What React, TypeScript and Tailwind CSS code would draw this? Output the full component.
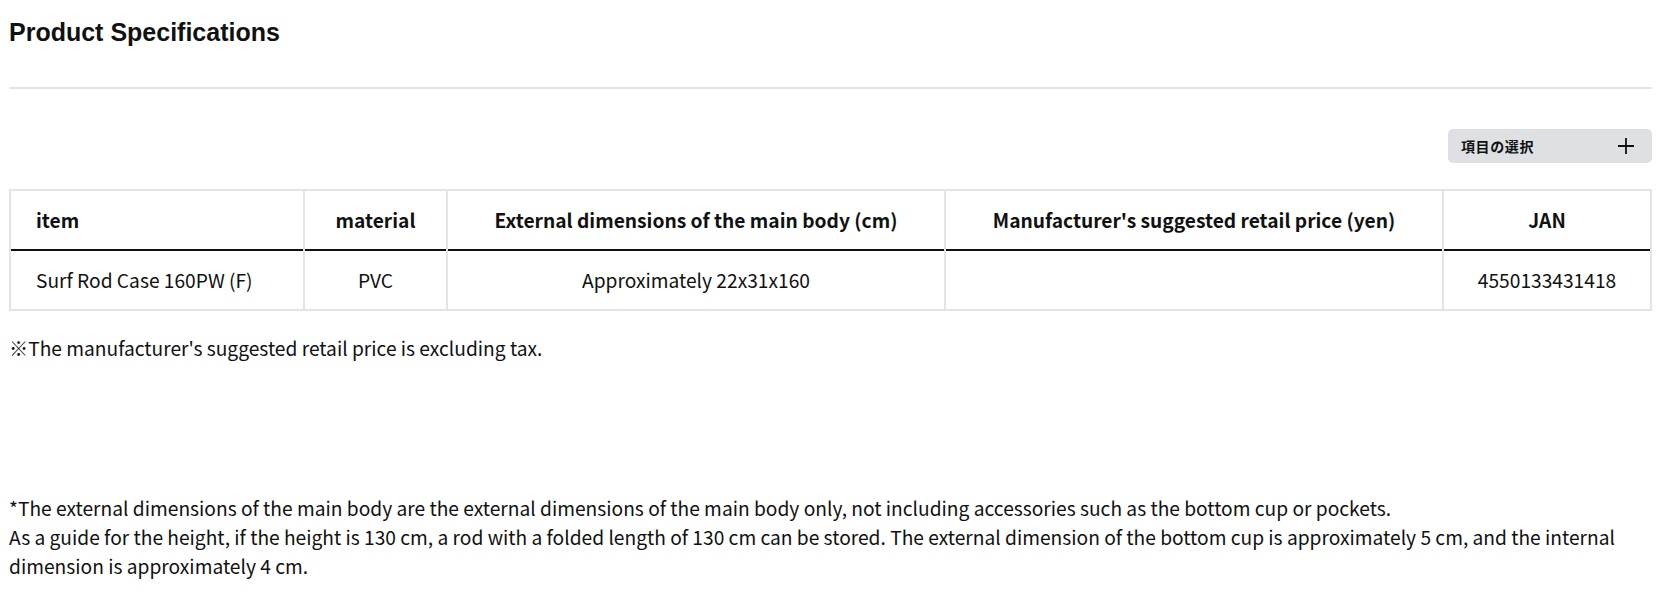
export default function App() {
  const font = { fontFamily: '"Noto Sans CJK JP", "Noto Sans", sans-serif' };
  return (
    <div className="min-h-screen bg-white px-[9px] text-[#111]" style={font}>
      <h2 className="pt-[16px] text-[25px] leading-[32px] font-bold text-[#111]" style={{ fontFamily: '"Liberation Sans", Arial, sans-serif' }}>
        Product Specifications
      </h2>
      <div className="mt-[39px] h-[2px] bg-[#e4e4e4]" />

      <div className="mt-[40px] flex justify-end">
        <button className="flex h-[34px] w-[204px] items-center justify-between rounded-[5px] bg-[#dee0e4] pl-[13px] pr-[17px] text-[14px] font-bold tracking-[0.6px] text-[#111]">
          <span>項目の選択</span>
          <svg width="18" height="18" viewBox="0 0 18 18" fill="none" stroke="#111" strokeWidth="1.8">
            <path d="M9 1v16M1 9h16" />
          </svg>
        </button>
      </div>

      <table className="mt-[26px] w-full table-fixed border-collapse border-2 border-[#e4e4e4] text-[19.2px]">
        <colgroup>
          <col className="w-[294px]" />
          <col className="w-[143px]" />
          <col className="w-[498px]" />
          <col className="w-[498px]" />
          <col />
        </colgroup>
        <thead>
          <tr className="h-[60px] border-b-2 border-b-[#111]">
            <th className="border-x-2 border-[#e4e4e4] pl-[25px] text-left font-bold">item</th>
            <th className="border-x-2 border-[#e4e4e4] text-center font-bold">material</th>
            <th className="border-x-2 border-[#e4e4e4] text-center font-bold">External dimensions of the main body (cm)</th>
            <th className="border-x-2 border-[#e4e4e4] text-center font-bold">Manufacturer's suggested retail price (yen)</th>
            <th className="border-x-2 border-[#e4e4e4] text-center font-bold">JAN</th>
          </tr>
        </thead>
        <tbody>
          <tr className="h-[60px]">
            <td className="border-x-2 border-[#e4e4e4] pl-[25px] text-left">Surf Rod Case 160PW (F)</td>
            <td className="border-x-2 border-[#e4e4e4] text-center">PVC</td>
            <td className="border-x-2 border-[#e4e4e4] text-center">Approximately 22x31x160</td>
            <td className="border-x-2 border-[#e4e4e4] text-center"></td>
            <td className="border-x-2 border-[#e4e4e4] text-center">4550133431418</td>
          </tr>
        </tbody>
      </table>

      <p className="mt-[23px] text-[19.2px] leading-[28px]">※The manufacturer's suggested retail price is excluding tax.</p>

      <p className="mt-[132px] pb-[20px] text-[19.2px] leading-[29px]">
        *The external dimensions of the main body are the external dimensions of the main body only, not including accessories such as the bottom cup or pockets.
        <br />
        As a guide for the height, if the height is 130 cm, a rod with a folded length of 130 cm can be stored. The external dimension of the bottom cup is approximately 5 cm, and the internal dimension is approximately 4 cm.
      </p>
    </div>
  );
}
